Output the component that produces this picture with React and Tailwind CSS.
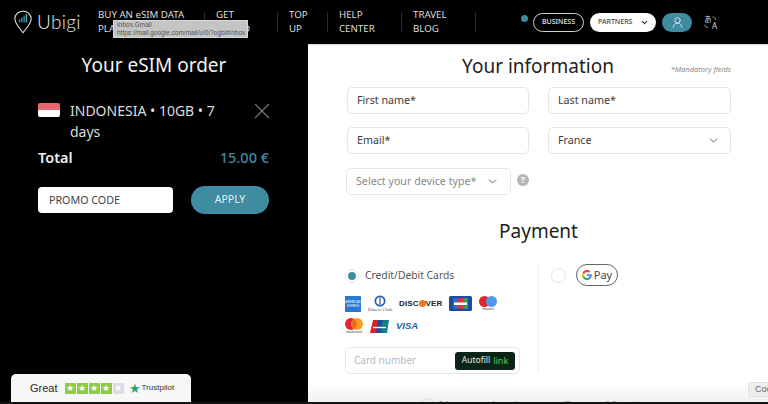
import React from "react";
import { ChevronDown, X, UserRound } from "lucide-react";

const sans = "font-['Noto_Sans','Open_Sans',sans-serif]";

const navItems = [
  { top: "BUY AN eSIM DATA", bottom: "PLAN", w: "w-[106px]" },
  { top: "GET", bottom: "A CARD", w: "w-[61px]" },
  { top: "TOP", bottom: "UP", w: "w-[38px]" },
  { top: "HELP", bottom: "CENTER", w: "w-[62px]" },
  { top: "TRAVEL", bottom: "BLOG", w: "w-[62px]" },
];

const Logo = () => (
  <svg width="18" height="24" viewBox="0 0 20 29" fill="none" preserveAspectRatio="none">
    <path d="M10 27.5C7 22.5 1 17 1 10.5a9 9 0 0 1 18 0C19 17 13 22.5 10 27.5Z" stroke="#e5e5e5" strokeWidth="1.2" />
    <rect x="5.5" y="11" width="1.6" height="4" fill="#3f8ba0" />
    <rect x="8" y="9" width="1.6" height="6" fill="#3f8ba0" />
    <rect x="10.5" y="7" width="1.6" height="8" fill="#3f8ba0" />
    <rect x="13" y="5" width="1.6" height="10" fill="#5aa7ba" />
  </svg>
);

const Translate = () => (
  <div className="ml-[12px] mt-[1px] w-[13px] h-[13px] relative text-[#d8d8d8] leading-none">
    <span className="absolute left-0 top-[-1px] text-[7.5px] font-['Noto_Sans_CJK_JP',sans-serif]">あ</span>
    <span className="absolute right-0 bottom-[-1px] text-[8px]">A</span>
    <svg className="absolute inset-0" width="13" height="13" viewBox="0 0 13 13" fill="none" stroke="#d8d8d8" strokeWidth="0.7">
      <path d="M8.500 1c2 0 3 1 3 3" />
      <path d="M1 8.500c0 2 1 3 3 3" />
    </svg>
  </div>
);

const Field = ({ label, className = "", muted, children }) => (
  <div className={`h-[27px] rounded-[5px] border border-[#e6e6e6] flex items-center justify-between pl-[9px] pr-[10px] text-[10.700px] whitespace-nowrap ${muted ? "text-[#8a8a8a]" : "text-[#3c3c3c]"} ${className}`}>
    <span>{label}</span>
    {children}
  </div>
);

const Amex = () => (
  <div className="w-[16px] h-[16px] bg-[#2a78d0] flex flex-col items-center justify-center text-[3px] leading-[4px] text-white">
    <span>AMERICAN</span>
    <span>EXPRESS</span>
  </div>
);

const Diners = () => (
  <div className="w-[24px] flex flex-col items-center">
    <svg width="12" height="12" viewBox="0 0 12 12">
      <circle cx="6" cy="6" r="5.5" fill="#1f5fa8" />
      <circle cx="6" cy="6" r="3.8" fill="#fff" />
      <rect x="5.400" y="2.500" width="1.200" height="7" fill="#1f5fa8" />
    </svg>
    <span className="text-[5px] leading-[6px] text-[#555] font-['Liberation_Serif',serif] whitespace-nowrap">Diners Club</span>
  </div>
);

const Discover = () => (
  <div className="flex items-center text-[8px] font-bold text-[#222] font-['Liberation_Sans',sans-serif] tracking-[0.1px]">
    <span>DISC</span>
    <span className="w-[7px] h-[7px] rounded-full bg-[#ee7a22] inline-block" />
    <span>VER</span>
  </div>
);

const Jcb = () => (
  <svg width="23" height="15" viewBox="0 0 23 15">
    <rect width="23" height="15" rx="1.500" fill="#1d4a9c" />
    <rect x="4" y="2" width="5" height="11" rx="1" fill="#2a6fc0" />
    <rect x="9" y="2" width="5" height="11" rx="1" fill="#d8303c" />
    <rect x="14" y="2" width="5" height="11" rx="1" fill="#2f9e55" />
    <rect x="5" y="6.500" width="13" height="2.500" fill="#fff" />
  </svg>
);

const Maestro = () => (
  <div className="flex flex-col items-center">
    <svg width="18" height="11" viewBox="0 0 18 11">
      <circle cx="5.500" cy="5.500" r="5.500" fill="#e0262c" />
      <circle cx="12.500" cy="5.500" r="5.500" fill="#4c9be8" />
    </svg>
    <span className="text-[3px] leading-[4px] text-[#333]">maestro</span>
  </div>
);

const Mastercard = () => (
  <div className="flex flex-col items-center">
    <svg width="18" height="12" viewBox="0 0 18 12">
      <circle cx="6" cy="6" r="6" fill="#e0262c" />
      <circle cx="12" cy="6" r="6" fill="#f59e27" />
      <path d="M9 1a6 6 0 0 1 0 10 6 6 0 0 1 0-10Z" fill="#f0661e" />
    </svg>
    <span className="text-[3px] leading-[4px] text-[#333]">mastercard</span>
  </div>
);

const UnionPay = () => (
  <svg width="19" height="13" viewBox="0 0 19 13">
    <path d="M3 0h6L7 13H0Z" fill="#d8232f" />
    <path d="M8 0h6l-2 13H6Z" fill="#1c4f8f" />
    <path d="M13 0h6l-2 13h-6Z" fill="#12828a" />
    <path d="M3 7.500h13" stroke="#fff" strokeWidth="1.400" />
  </svg>
);

const Visa = () => (
  <span className="text-[9.500px] font-bold italic text-[#2b5ea8] font-['Liberation_Sans',sans-serif] leading-none">VISA</span>
);

const GoogleG = () => (
  <svg width="10" height="10" viewBox="0 0 48 48">
    <path fill="#EA4335" d="M24 9.500c3.500 0 6.600 1.200 9.100 3.600l6.800-6.800C35.800 2.400 30.400 0 24 0 14.600 0 6.500 5.400 2.600 13.200l7.900 6.100C12.400 13.600 17.700 9.500 24 9.500z" />
    <path fill="#4285F4" d="M47 24.500c0-1.600-.1-3.100-.4-4.500H24v9h12.900c-.6 3-2.200 5.500-4.700 7.200l7.600 5.900C44.300 37.900 47 31.800 47 24.500z" />
    <path fill="#FBBC05" d="M10.500 28.700A14.500 14.500 0 0 1 10.500 19.300l-7.900-6.100a24 24 0 0 0 0 21.600z" />
    <path fill="#34A853" d="M24 48c6.500 0 11.900-2.100 15.800-5.900l-7.600-5.900c-2.100 1.400-4.900 2.300-8.200 2.300-6.300 0-11.600-4.100-13.500-9.800l-7.900 6.100C6.500 42.600 14.600 48 24 48z" />
  </svg>
);

const Star = ({ on }) => (
  <div className={`w-[11px] h-[11px] flex items-center justify-center text-white text-[9px] leading-none ${on ? "bg-[#8ccf45]" : "bg-[#dcdce6]"}`}>★</div>
);

export default function App() {
  return (
    <div className={`relative w-[768px] h-[404px] overflow-hidden flex flex-col bg-black ${sans}`}>
      {/* header */}
      <header className="h-[44px] shrink-0 bg-black flex items-center pl-[14px] text-white">
        <div className="w-[84px] flex items-center gap-[5px]">
          <Logo />
          <span className="text-[19px] leading-none text-[#e8e8e8] font-['Lato',sans-serif] font-light tracking-[0.3px] pb-[2px]">Ubigi</span>
        </div>
        <nav className="flex items-center">
          {navItems.map((item) => (
            <div key={item.top} className={`${item.w} h-[20px] box-content mr-[11px] flex items-center border-r border-[#2a2a2a]`}>
              <div className="text-[9.700px] leading-[14.500px] text-[#dedede] whitespace-nowrap">
                <div>{item.top}</div>
                <div>{item.bottom}</div>
              </div>
            </div>
          ))}
        </nav>
        <div className="w-[7px] h-[7px] rounded-full bg-[#3f8ba0] ml-[34px] mb-[7px]" />
        <div className="ml-[5px] w-[51px] h-[19px] rounded-full border border-[#cfcfcf] flex items-center justify-center text-[7px] font-medium text-[#e8e8e8]">BUSINESS</div>
        <div className="ml-[6px] w-[66px] h-[19px] rounded-full bg-white flex items-center justify-between pl-[8px] pr-[7px] text-[7px] font-medium text-[#444]">
          PARTNERS
          <ChevronDown size={9} strokeWidth={3} className="text-[#333]" />
        </div>
        <div className="ml-[6px] w-[30px] h-[19px] rounded-full bg-[#3f8ba0] flex items-center justify-center">
          <UserRound size={13} strokeWidth={1.300} className="text-white" />
        </div>
        <Translate />
      </header>

      <div className="flex-1 min-h-0 flex">
        {/* order summary */}
        <aside className="w-[308px] shrink-0 bg-black text-white pl-[38px] pr-[39px]">
          <h2 className="text-[19px] leading-[27px] text-center text-[#f2f2f2] mt-[8px] pl-[1px]">Your eSIM order</h2>
          <div className="flex mt-[21px] h-[42px]">
            <div className="w-[22px] h-[14px] rounded-[2px] overflow-hidden shrink-0 mt-[3px] flex flex-col">
              <div className="h-1/2 bg-[#e46a70]" />
              <div className="h-1/2 bg-white" />
            </div>
            <div className="ml-[10px] w-[170px] text-[14px] leading-[21px] text-[#dcdcdc]">INDONESIA • 10GB • 7 days</div>
            <X size={26} strokeWidth={1.100} className="ml-auto mr-[-6px] mt-[-2px] text-[#777777] shrink-0" />
          </div>
          <div className="flex items-center justify-between mt-[4px] h-[24px]">
            <span className="text-[14.500px] font-semibold text-[#eeeeee]">Total</span>
            <span className="text-[14.500px] font-medium text-[#3f8ba0]">15.00 €</span>
          </div>
          <div className="flex items-center justify-between mt-[16px]">
            <div className="w-[135px] h-[26px] rounded-[4px] bg-white flex items-center pl-[11px] text-[10.700px] text-[#444]">PROMO CODE</div>
            <div className="w-[78px] h-[28px] rounded-full bg-[#3f8ba0] flex items-center justify-center text-[10.500px] text-[#e6f0f3]">APPLY</div>
          </div>
        </aside>

        {/* form */}
        <main className="flex-1 bg-white border-t border-[#d5d5d5] pl-[38px] pr-[37px] text-[#1f1f1f]">
          <div className="relative pt-[6px]">
            <h1 className="text-[19px] leading-[30px] text-center pr-[1px] text-[#222]">Your information</h1>
            <span className="absolute right-0 top-[19px] text-[7.500px] italic text-[#8a8a8a]">*Mandatory fields</span>
          </div>
          <div className="grid grid-cols-[182px_183px] gap-x-[19px] gap-y-[13px] mt-[6px] ml-[1px]">
            <Field label="First name*" />
            <Field label="Last name*" />
            <Field label="Email*" />
            <Field label="France">
              <ChevronDown size={13} strokeWidth={1.500} className="text-[#444]" />
            </Field>
          </div>
          <div className="flex items-center mt-[14px]">
            <Field label="Select your device type*" muted className="w-[165px]">
              <ChevronDown size={13} strokeWidth={1.500} className="text-[#444] mr-[1px]" />
            </Field>
            <div className="ml-[6px] mb-[4px] w-[12px] h-[12px] rounded-full bg-[#b5b5b5] text-white text-[9px] font-bold leading-none flex items-center justify-center">?</div>
          </div>
          <h2 className="text-[19px] leading-[27px] text-center mt-[23px] text-[#222]">Payment</h2>

          <div className="flex mt-[20px] ml-[-1px]">
            <div className="w-[193px]">
              <div className="flex items-center h-[22px]">
                <div className="w-[14px] h-[14px] rounded-full border border-[#e3e3e3] flex items-center justify-center">
                  <div className="w-[8px] h-[8px] rounded-full bg-[#3f8ba0]" />
                </div>
                <span className="ml-[6px] text-[10.300px] text-[#555]">Credit/Debit Cards</span>
              </div>
              <div className="flex items-center gap-[7px] mt-[8px] h-[17px]">
                <Amex />
                <Diners />
                <Discover />
                <Jcb />
                <Maestro />
              </div>
              <div className="flex items-center gap-[7px] mt-[6px] h-[16px]">
                <Mastercard />
                <UnionPay />
                <Visa />
              </div>
              <div className="mt-[13px] w-[175px] h-[27px] rounded-[5px] border border-[#e6e6e6] flex items-center justify-between pl-[8px] pr-[4px]">
                <span className="text-[10px] text-[#b4bac4]">Card number</span>
                <div className="w-[60px] h-[18px] rounded-[3px] bg-[#0b2416] flex items-center justify-center gap-[3px] text-[8.500px] leading-none">
                  <span className="text-[#e8e8e8]">Autofill</span>
                  <span className="text-[#62c45c] text-[9px]">link</span>
                </div>
              </div>
            </div>
            <div className="w-[1px] h-[108px] bg-[#eeeeee]" />
            <div className="ml-[12px] flex items-start mt-[-1px]">
              <div className="mt-[4px] w-[15px] h-[15px] rounded-full border border-[#e3e3e3]" />
              <div className="ml-[10px] w-[42px] h-[22px] rounded-full border border-[#666] flex items-center justify-center gap-[2px] text-[11px] text-[#444]">
                <GoogleG />
                Pay
              </div>
            </div>
          </div>
          <div className="flex items-center gap-[4px] mt-[24px] ml-[74px] text-[10.700px] leading-none text-[#444]">
            <div className="w-[15px] h-[15px] rounded-full border border-[#c8c8c8] shrink-0" />
            <span className="whitespace-nowrap">I have read and agree to <span className="text-[#3f8ba0]">Terms of Service</span></span>
          </div>
        </main>
      </div>

      {/* bottom fade + bottom edge of window */}
      <div className="absolute left-[308px] right-0 bottom-[2px] h-[20px] bg-gradient-to-b from-transparent to-[#e6e6e6]/60" />
      <div className="h-[2px] shrink-0 bg-[#141414]" />

      {/* tooltip from the browser */}
      <div className="absolute left-[113px] top-[20px] w-[135px] h-[18px] bg-[#c4c4c4] border border-[#d8d8d8] pl-[3px] text-[6.500px] leading-[8px] text-[#555] font-['Liberation_Sans',sans-serif] whitespace-nowrap">
        <div>Inbox.Gmail</div>
        <div>https://mail.google.com/mail/u/0/?ogbl#inbox</div>
      </div>

      {/* trustpilot badge */}
      <div className="absolute left-[11px] bottom-[2px] w-[180px] h-[28px] rounded-t-[5px] bg-[#f7f7f7] flex items-center pl-[19px] font-['Liberation_Sans',sans-serif]">
        <span className="text-[11px] font-medium text-[#2b2b2b]">Great</span>
        <div className="flex gap-[1px] ml-[7px]">
          <Star on />
          <Star on />
          <Star on />
          <Star on />
          <Star />
        </div>
        <span className="ml-[5px] text-[13px] leading-none text-[#27a66e]">★</span>
        <span className="ml-[1px] text-[8px] text-[#333]">Trustpilot</span>
      </div>

      {/* cookie button cut by the window edge */}
      <div className="absolute left-[748px] top-[382px] w-[40px] h-[15px] rounded-[3px] bg-[#eeeeee] border border-[#e2e2e2] pl-[6px] text-[9px] leading-[13px] text-[#666] font-['Liberation_Sans',sans-serif] whitespace-nowrap">Cookies</div>
    </div>
  );
}
